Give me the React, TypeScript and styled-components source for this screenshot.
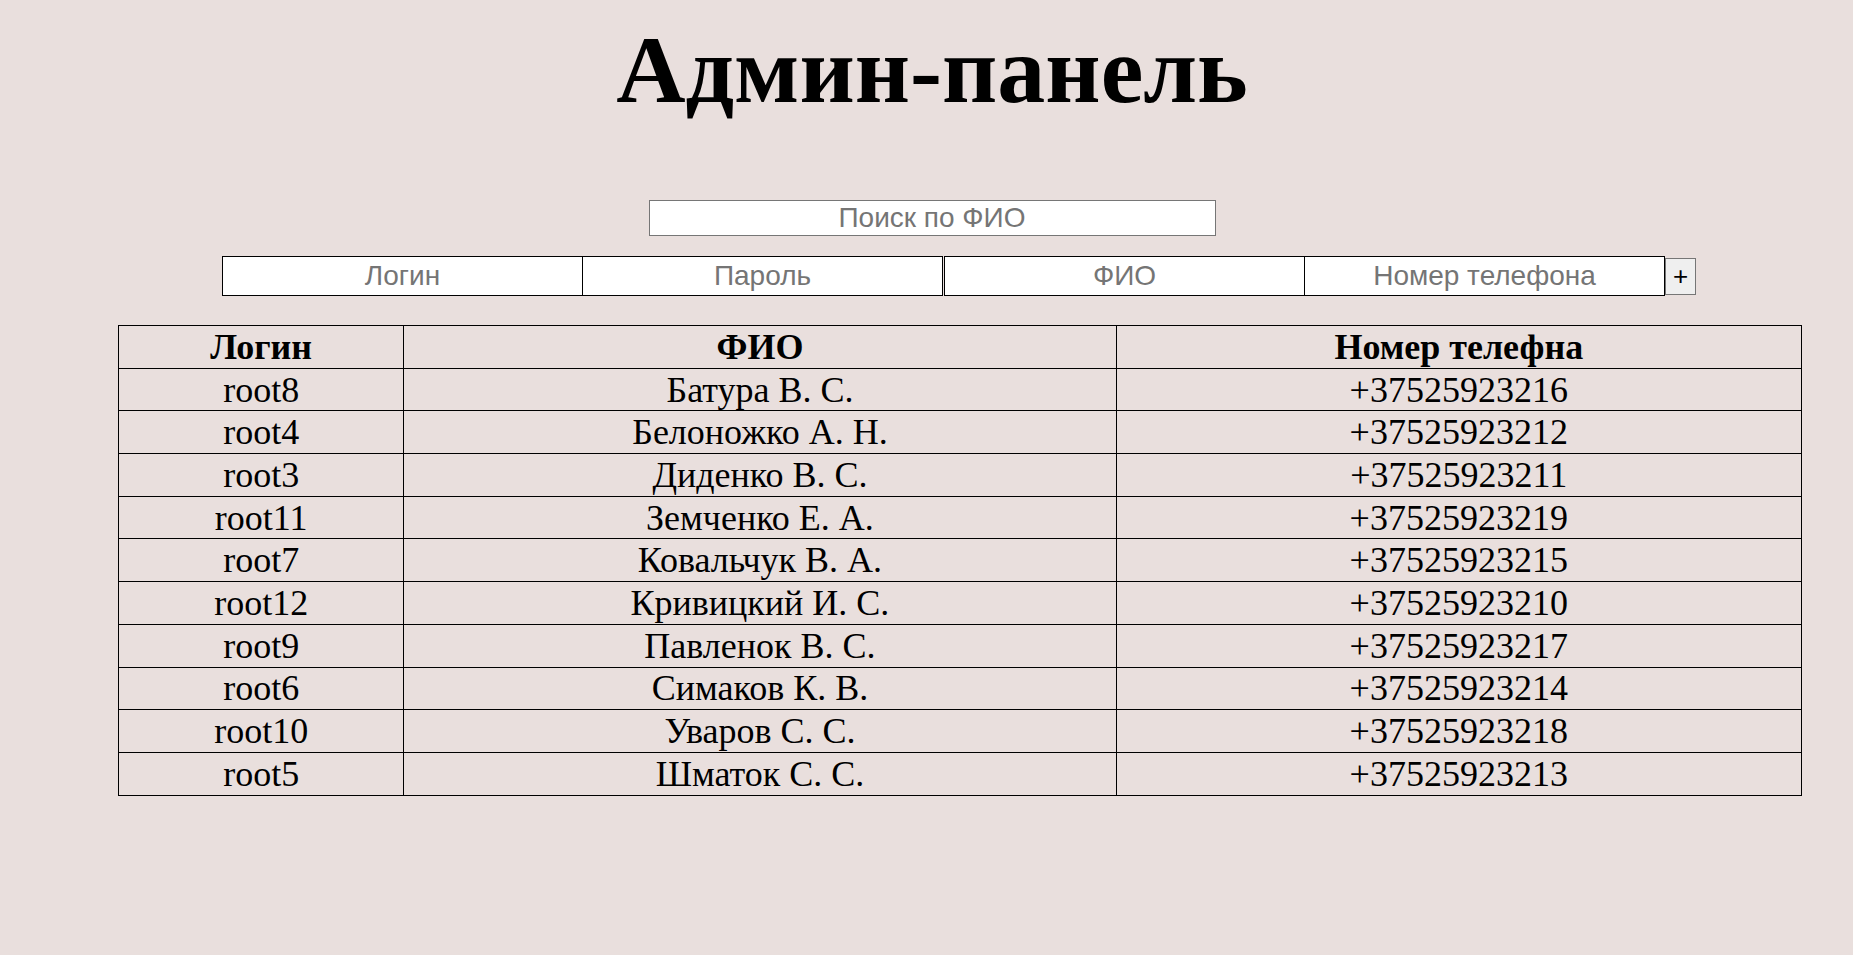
import React from "react";
import styled, { createGlobalStyle } from "styled-components";

const Global = createGlobalStyle`
  html, body {
    margin: 0;
    padding: 0;
    background: #e9dfdd;
  }
  body {
    font-family: "Liberation Serif", "Times New Roman", serif;
    color: #000;
  }
`;

const Page = styled.div`
  display: flex;
  flex-direction: column;
  padding-top: 15px;
`;

const Header = styled.header`
  display: flex;
  flex-direction: column;
  align-items: center;
  padding-left: 11px;
`;

const Title = styled.h1`
  margin: 0;
  font-family: "Liberation Serif", "Times New Roman", serif;
  font-weight: bold;
  font-size: 96px;
  line-height: 110px;
`;

const Search = styled.input`
  margin-top: 75px;
  width: 567px;
  height: 36px;
  box-sizing: border-box;
  border: 1px solid #767676;
  background: #fff;
  text-align: center;
  font-family: "Liberation Sans", Arial, sans-serif;
  font-size: 28px;
  padding: 0;
  outline: none;
  &::placeholder {
    color: #757575;
  }
`;

const FormRow = styled.form`
  display: flex;
  margin: 20px 0 0 222px;
  align-items: center;
`;

const Field = styled.input<{ $gap?: boolean }>`
  width: 361px;
  height: 40px;
  box-sizing: border-box;
  border: 1px solid #000;
  background: #fff;
  text-align: center;
  font-family: "Liberation Sans", Arial, sans-serif;
  font-size: 28px;
  padding: 0;
  margin-left: ${(p) => (p.$gap ? "1px" : "-1px")};
  outline: none;
  &:first-child {
    margin-left: 0;
  }
  &::placeholder {
    color: #757575;
  }
`;

const AddButton = styled.button`
  width: 31px;
  height: 37px;
  box-sizing: border-box;
  border: 1px solid #767676;
  background: #efefef;
  font-family: "Liberation Sans", Arial, sans-serif;
  font-size: 26px;
  line-height: 1;
  padding: 0;
  margin-left: 0;
  color: #000;
`;

const Table = styled.table`
  margin: 29px 0 0 118px;
  width: 1684px;
  border-collapse: collapse;
  font-family: "Liberation Serif", "Times New Roman", serif;
  font-size: 36px;
`;

const HeadCell = styled.th<{ $w: number }>`
  width: ${(p) => p.$w}px;
  border: 1px solid #000;
  padding: 0;
  height: 41.7px;
  line-height: 40px;
  font-weight: bold;
  text-align: center;
`;

const Cell = styled.td`
  border: 1px solid #000;
  padding: 0;
  height: 41.7px;
  line-height: 40px;
  text-align: center;
`;

const rows: [string, string, string][] = [
  ["root8", "Батура В. С.", "+37525923216"],
  ["root4", "Белоножко А. Н.", "+37525923212"],
  ["root3", "Диденко В. С.", "+37525923211"],
  ["root11", "Земченко Е. А.", "+37525923219"],
  ["root7", "Ковальчук В. А.", "+37525923215"],
  ["root12", "Кривицкий И. С.", "+37525923210"],
  ["root9", "Павленок В. С.", "+37525923217"],
  ["root6", "Симаков К. В.", "+37525923214"],
  ["root10", "Уваров С. С.", "+37525923218"],
  ["root5", "Шматок С. С.", "+37525923213"],
];

export default function App() {
  return (
    <>
      <Global />
      <Page>
        <Header>
          <Title>Админ-панель</Title>
          <Search placeholder="Поиск по ФИО" />
        </Header>
        <FormRow onSubmit={(e) => e.preventDefault()}>
          <Field placeholder="Логин" />
          <Field placeholder="Пароль" />
          <Field placeholder="ФИО" $gap />
          <Field placeholder="Номер телефона" />
          <AddButton type="submit">+</AddButton>
        </FormRow>
        <Table>
          <thead>
            <tr>
              <HeadCell $w={285}>Логин</HeadCell>
              <HeadCell $w={713}>ФИО</HeadCell>
              <HeadCell $w={686}>Номер телефна</HeadCell>
            </tr>
          </thead>
          <tbody>
            {rows.map((r) => (
              <tr key={r[0]}>
                <Cell>{r[0]}</Cell>
                <Cell>{r[1]}</Cell>
                <Cell>{r[2]}</Cell>
              </tr>
            ))}
          </tbody>
        </Table>
      </Page>
    </>
  );
}
